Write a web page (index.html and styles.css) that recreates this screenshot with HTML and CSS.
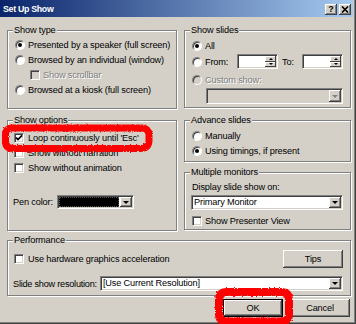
FILE: index.html
```html
<!DOCTYPE html>
<html lang="en">
<head>
    <meta charset="UTF-8">
    <title>Set Up Show</title>
    <link rel="stylesheet" href="styles.css">
</head>
<body>
<div class="dialog">
    <div class="titlebar">
        <span class="title">Set Up Show</span>
        <div class="caption-btns">
            <span class="cap-btn">?</span>
            <span class="cap-btn">
                <svg width="8" height="7" viewBox="0 0 8 7"><path d="M1 0.5l6 6M7 0.5l-6 6" stroke="#000" stroke-width="1.6"/></svg>
            </span>
        </div>
    </div>

    <div class="content">
        <div class="columns">
            <div class="col">
                <div class="group show-type">
                    <div class="legend">Show type</div>
                    <div class="row first"><span class="radio on"></span>Presented by a speaker (full screen)</div>
                    <div class="row"><span class="radio"></span>Browsed by an individual (window)</div>
                    <div class="row off"><span class="check indent"></span>Show scrollbar</div>
                    <div class="row"><span class="radio"></span>Browsed at a kiosk (full screen)</div>
                </div>

                <div class="group show-options">
                    <div class="legend">Show options</div>
                    <div class="row loop">
                        <span class="check"><svg width="8" height="8" viewBox="0 0 8 8"><path d="M1 3.6l2 2 4-4.2" fill="none" stroke="#000" stroke-width="1.7"/></svg></span>
                        Loop continuously until 'Esc'
                    </div>
                    <div class="row"><span class="check"></span>Show without narration</div>
                    <div class="row"><span class="check"></span>Show without animation</div>
                    <div class="row pen">
                        <span class="label pen-label">Pen color:</span>
                        <div class="field combo pen-combo">
                            <span class="swatch"></span>
                            <span class="drop"></span>
                        </div>
                    </div>
                </div>
            </div>

            <div class="col">
                <div class="group show-slides">
                    <div class="legend">Show slides</div>
                    <div class="row all"><span class="radio on"></span>All</div>
                    <div class="row from">
                        <span class="radio"></span>
                        <span class="from-label">From:</span>
                        <div class="field spin">
                            <div class="spin-btns"><span class="up"></span><span class="down"></span></div>
                        </div>
                        <span class="to-label">To:</span>
                        <div class="field spin">
                            <div class="spin-btns"><span class="up"></span><span class="down"></span></div>
                        </div>
                    </div>
                    <div class="row custom off"><span class="radio"></span>Custom show:</div>
                    <div class="field combo disabled custom-combo">
                        <span class="value"></span>
                        <span class="drop"></span>
                    </div>
                </div>

                <div class="group advance">
                    <div class="legend">Advance slides</div>
                    <div class="row first"><span class="radio"></span>Manually</div>
                    <div class="row"><span class="radio on"></span>Using timings, if present</div>
                </div>

                <div class="group monitors">
                    <div class="legend">Multiple monitors</div>
                    <div class="row display-label">Display slide show on:</div>
                    <div class="field combo monitor-combo">
                        <span class="value">Primary Monitor</span>
                        <span class="drop"></span>
                    </div>
                    <div class="row presenter"><span class="check"></span>Show Presenter View</div>
                </div>
            </div>
        </div>

        <div class="group performance">
            <div class="legend">Performance</div>
            <div class="row perf-top">
                <span class="check"></span>Use hardware graphics acceleration
                <span class="btn tips">Tips</span>
            </div>
            <div class="row perf-res">
                <span class="label res-label">Slide show resolution:</span>
                <div class="field combo res-combo">
                    <span class="value">[Use Current Resolution]</span>
                    <span class="drop"></span>
                </div>
            </div>
        </div>

        <div class="actions">
            <span class="btn default">OK</span>
            <span class="btn">Cancel</span>
        </div>
    </div>

    <!-- red hand-drawn marks on top of the screenshot -->
    <svg class="marks" width="356" height="324" viewBox="0 0 356 324">
        <defs>
            <filter id="rough" x="-5%" y="-20%" width="110%" height="140%">
                <feTurbulence type="fractalNoise" baseFrequency="0.8" numOctaves="2" seed="4"/>
                <feDisplacementMap in="SourceGraphic" scale="3"/>
            </filter>
        </defs>
        <g fill="none" stroke="#f00" stroke-linejoin="round" filter="url(#rough)">
            <path stroke-width="7" d="M13 128 H142 Q149 128.5 149 135 V141 Q148.5 148.5 140 148.5 H13 Q5.5 148.5 5.5 141 V135 Q5.5 127.5 13 128 Z"/>
            <path stroke-width="8" d="M227 292 H281 Q289 292 289 300 V314 Q289 321.5 281 321.5 H227 Q219 321.5 219 314 V300 Q219 292 227 292 Z"/>
        </g>
    </svg>
</div>
</body>
</html>
```

FILE: styles.css
```css
body {
    margin: 0;
    font-family: "Liberation Sans", Arial, sans-serif;
    font-size: 9.2px;
    letter-spacing: -0.15px;
    color: #000;
}
.dialog {
    position: relative;
    width: 356px;
    height: 324px;
    background: #d4d0c8;
    box-shadow: inset -1px -1px 0 #404040, inset -2px -2px 0 #808080;
    overflow: hidden;
}
.titlebar {
    height: 17px;
    margin-right: 3px;
    padding: 0 2px 0 3px;
    background: linear-gradient(to right, #0a246a, #a6caf0);
    display: flex;
    align-items: center;
    justify-content: space-between;
}
.title {
    color: #fff;
    font-weight: bold;
    font-size: 8.8px;
    letter-spacing: -0.3px;
}
.caption-btns {
    display: flex;
    gap: 2px;
    padding-top: 1px;
}
.cap-btn {
    width: 12px;
    height: 11px;
    background: #d4d0c8;
    box-shadow: inset -1px -1px #404040, inset 1px 1px #fff, inset -2px -2px #808080;
    display: flex;
    align-items: center;
    justify-content: center;
    font-weight: bold;
    font-size: 9px;
    line-height: 1;
}
.content {
    padding: 13px 5px 0 7px;
}
.columns {
    display: grid;
    grid-template-columns: 170px 167px;
    column-gap: 7px;
    align-items: start;
}
.col {
    display: flex;
    flex-direction: column;
}
.group {
    box-sizing: border-box;
    border: 1px solid #808080;
    box-shadow: 1px 1px 0 #fff, inset 1px 1px 0 #fff;
    padding: 0 7px 0 6px;
}
.legend {
    display: table;
    height: 12px;
    line-height: 12px;
    margin: -7px 0 0 -1px;
    padding: 0 1px;
    background: #d4d0c8;
}
.row {
    display: flex;
    align-items: center;
    height: 15px;
    white-space: nowrap;
}
.off {
    color: #808080;
    text-shadow: 1px 1px 0 #fff;
}

/* radios and checkboxes */
.radio {
    position: relative;
    flex: none;
    box-sizing: border-box;
    width: 10px;
    height: 10px;
    margin: 0 3px 0 1px;
    border-radius: 50%;
    background: #fff;
    border: 1px solid;
    border-color: #808080 #fff #fff #808080;
    box-shadow: inset 1px 1px #404040;
}
.radio.on::after {
    content: "";
    position: absolute;
    left: 2px;
    top: 2px;
    width: 4px;
    height: 4px;
    border-radius: 50%;
    background: #000;
}
.off .radio, .off .check {
    background: #d4d0c8;
}
.check {
    flex: none;
    box-sizing: border-box;
    width: 10px;
    height: 10px;
    margin-right: 4px;
    background: #fff;
    border: 1px solid;
    border-color: #808080 #fff #fff #808080;
    box-shadow: inset 1px 1px #404040, inset -1px -1px #d4d0c8;
    display: flex;
    align-items: center;
    justify-content: center;
}
.check.indent {
    margin-left: 16px;
    margin-right: 3px;
}

/* sunken fields, combos, spinners */
.field {
    box-sizing: border-box;
    display: flex;
    justify-content: flex-end;
    padding: 1px;
    background: #fff;
    border: 1px solid;
    border-color: #808080 #fff #fff #808080;
    box-shadow: inset 1px 1px #404040, inset -1px -1px #d4d0c8;
}
.field.disabled {
    background: #d4d0c8;
}
.combo .value {
    flex: 1;
    padding-left: 1px;
    line-height: 11px;
    white-space: nowrap;
    overflow: hidden;
}
.drop {
    flex: none;
    width: 12px;
    background: #d4d0c8;
    box-shadow: inset -1px -1px #404040, inset 1px 1px #fff, inset -2px -2px #808080;
    display: flex;
    align-items: center;
    justify-content: center;
}
.drop::after {
    content: "";
    border-left: 3px solid transparent;
    border-right: 3px solid transparent;
    border-top: 3px solid #000;
}
.disabled .drop::after {
    border-top-color: #808080;
}
.spin {
    width: 41px;
    height: 15px;
}
.spin-btns {
    display: flex;
    flex-direction: column;
    width: 11px;
}
.spin-btns span {
    flex: 1;
    background: #d4d0c8;
    box-shadow: inset -1px -1px #404040, inset 1px 1px #fff;
    display: flex;
    align-items: center;
    justify-content: center;
}
.spin-btns .up::after {
    content: "";
    border-left: 2px solid transparent;
    border-right: 2px solid transparent;
    border-bottom: 2px solid #000;
}
.spin-btns .down::after {
    content: "";
    border-left: 2px solid transparent;
    border-right: 2px solid transparent;
    border-top: 2px solid #000;
}

/* show type */
.show-type {
    height: 79px;
}
.show-type .first {
    margin-top: 1px;
}

/* show options */
.show-options {
    height: 111px;
    margin-top: 11px;
}
.show-options .loop {
    margin-top: 4px;
}
.pen {
    margin-top: 20px;
    height: 14px;
}
.label {
    flex: none;
    margin-left: -1px;
}
.pen-label {
    width: 44px;
}
.pen-combo {
    width: 77px;
    height: 14px;
}
.swatch {
    flex: 1;
    margin-right: 1px;
    background: #000;
    outline: 1px dotted #555;
    outline-offset: -1px;
}

/* show slides */
.show-slides {
    height: 78px;
}
.show-slides .all {
    margin-top: 2px;
}
.show-slides .from {
    margin-top: 1px;
}
.from-label {
    width: 32px;
}
.to-label {
    margin: 0 auto 0 4px;
}
.show-slides .custom {
    margin-top: 3px;
}
.custom-combo {
    margin: 1px 0 0 15px;
    height: 16px;
}

/* advance slides */
.advance {
    height: 42px;
    margin-top: 12px;
}
.advance .first {
    margin-top: 2px;
}

/* multiple monitors */
.monitors {
    height: 58px;
    margin-top: 10px;
}
.display-label {
    height: 13px;
    margin: 2px 0 0 1px;
}
.monitor-combo {
    height: 15px;
    margin-top: 2px;
}
.presenter {
    margin-top: 3px;
}
.presenter .check {
    margin: 0 3px 0 1px;
}

/* performance */
.performance {
    height: 56px;
    margin-top: 9px;
}
.perf-top {
    height: 18px;
    margin-top: 4px;
}
.perf-res {
    margin-top: 8px;
}
.res-label {
    margin-right: 3px;
    letter-spacing: -0.25px;
}
.res-combo {
    flex: 1;
    height: 15px;
}

/* push buttons */
.btn {
    box-sizing: border-box;
    width: 60px;
    height: 18px;
    background: #d4d0c8;
    box-shadow: inset -1px -1px #404040, inset 1px 1px #fff, inset -2px -2px #808080;
    display: flex;
    align-items: center;
    justify-content: center;
}
.tips {
    margin-left: auto;
}
.btn.default {
    border: 1px solid #000;
}
.actions {
    display: flex;
    justify-content: flex-end;
    gap: 7px;
    margin-top: 3px;
    padding-right: 1px;
}

.marks {
    position: absolute;
    left: 0;
    top: 0;
    pointer-events: none;
}
```
